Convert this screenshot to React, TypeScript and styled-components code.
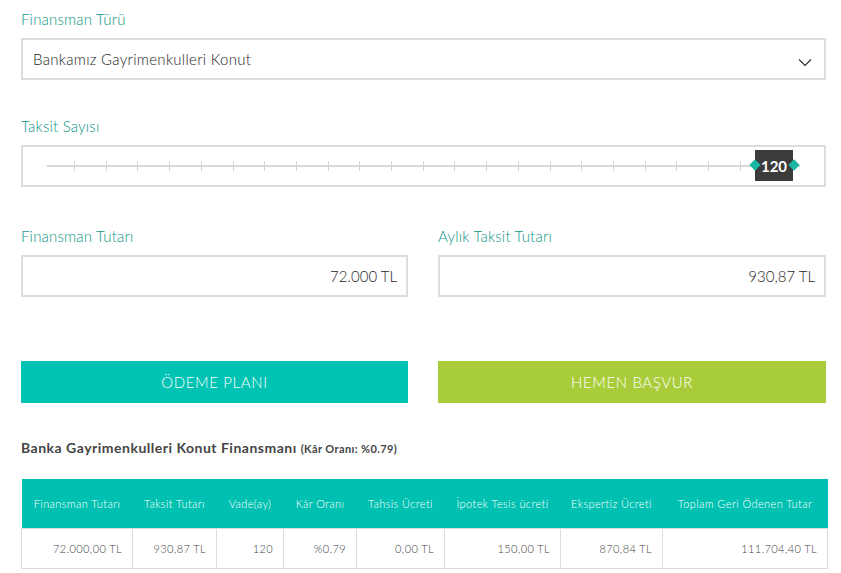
import styled, { createGlobalStyle } from "styled-components";

const GlobalStyle = createGlobalStyle`
  body {
    margin: 0;
    background: #ffffff;
    font-family: "Lato", "Open Sans", sans-serif;
    color: #333333;
  }
`;

const Page = styled.div`
  width: 805px;
  padding: 10px 0 0 21px;
`;

const Label = styled.div`
  font-size: 15px;
  font-weight: 300;
  line-height: 18px;
  letter-spacing: 0.2px;
  color: #0c9585;
  margin-bottom: 10px;
`;

const Box = styled.div`
  box-sizing: border-box;
  height: 42px;
  border: 2px solid #dddddd;
  background: #ffffff;
`;

const SelectBox = styled(Box)`
  display: flex;
  align-items: center;
  justify-content: space-between;
  padding: 0 12px 0 10px;
  font-size: 15px;
  font-weight: 300;
  letter-spacing: 0.3px;
  color: #1e1e1e;
  svg {
    margin-top: 7px;
  }
`;

const Section = styled.div<{ $gap: number }>`
  margin-top: ${(p) => p.$gap}px;
`;

const SliderBox = styled(Box)`
  position: relative;
  padding: 0 24px;
  display: flex;
  align-items: center;
`;

const Track = styled.div`
  position: relative;
  flex: 1;
  height: 2px;
  background: #d9d9d9;
`;

const Tick = styled.span`
  position: absolute;
  top: -4px;
  width: 1px;
  height: 10px;
  background: #d4d4d4;
`;

const Handle = styled.div`
  position: absolute;
  top: 3px;
  left: 732px;
  width: 38px;
  height: 31px;
  background: #3b3b3b;
  color: #ffffff;
  font-weight: 700;
  font-size: 15px;
  display: flex;
  align-items: center;
  justify-content: center;
  &::before,
  &::after {
    content: "";
    position: absolute;
    top: 11px;
    width: 8px;
    height: 8px;
    background: #1bb5a5;
    transform: rotate(45deg);
  }
  &::before {
    left: -4px;
  }
  &::after {
    right: -5px;
  }
`;

const Row = styled.div`
  display: grid;
  grid-template-columns: 387px 388px;
  column-gap: 30px;
`;

const ValueBox = styled(Box)`
  display: flex;
  align-items: center;
  justify-content: flex-end;
  padding: 0 9px;
  font-size: 15px;
  font-weight: 300;
  color: #1e1e1e;
`;

const Button = styled.button<{ $color: string }>`
  height: 42px;
  border: none;
  background: ${(p) => p.$color};
  color: #ffffff;
  font-family: inherit;
  font-size: 15px;
  font-weight: 300;
  letter-spacing: 0.6px;
  text-transform: uppercase;
  cursor: pointer;
`;

const Title = styled.div`
  font-size: 14px;
  line-height: 18px;
  font-weight: 700;
  letter-spacing: 0.5px;
  color: #454545;
  small {
    font-size: 11px;
    letter-spacing: 0.4px;
  }
`;

const Table = styled.table`
  width: 806px;
  margin-top: 21px;
  border-collapse: collapse;
  table-layout: fixed;
  font-size: 11px;
  font-weight: 300;
  letter-spacing: 0.4px;
`;

const Th = styled.th`
  height: 49px;
  padding: 0 2px;
  background: #00c1b1;
  color: #ffffff;
  font-weight: 300;
  text-align: center;
  white-space: nowrap;
`;

const Td = styled.td`
  height: 39px;
  padding: 0 10px;
  border: 1px solid #dddddd;
  color: #444444;
  text-align: right;
  white-space: nowrap;
`;

const columns = [
  { title: "Finansman Tutarı", width: 111, value: "72.000,00 TL" },
  { title: "Taksit Tutarı", width: 84, value: "930,87 TL" },
  { title: "Vade(ay)", width: 67, value: "120" },
  { title: "Kâr Oranı", width: 73, value: "%0.79" },
  { title: "Tahsis Ücreti", width: 88, value: "0,00 TL" },
  { title: "İpotek Tesis ücreti", width: 116, value: "150,00 TL" },
  { title: "Ekspertiz Ücreti", width: 102, value: "870,84 TL" },
  { title: "Toplam Geri Ödenen Tutar", width: 165, value: "111.704,40 TL" },
];

const ticks = Array.from({ length: 22 }, (_, i) => 27 + i * 31.7);

export default function App() {
  return (
    <Page>
      <GlobalStyle />
      <Label>Finansman Türü</Label>
      <SelectBox>
        <span>Bankamız Gayrimenkulleri Konut</span>
        <svg width="14" height="9" viewBox="0 0 14 9">
          <path d="M1 1.5 7 7.5 13 1.5" fill="none" stroke="#333" strokeWidth="1.2" />
        </svg>
      </SelectBox>

      <Section $gap={37}>
        <Label>Taksit Sayısı</Label>
        <SliderBox>
          <Track>
            {ticks.map((x) => (
              <Tick key={x} style={{ left: x }} />
            ))}
          </Track>
          <Handle>120</Handle>
        </SliderBox>
      </Section>

      <Section $gap={40}>
        <Row>
          <div>
            <Label>Finansman Tutarı</Label>
            <ValueBox>72.000 TL</ValueBox>
          </div>
          <div>
            <Label>Aylık Taksit Tutarı</Label>
            <ValueBox>930,87 TL</ValueBox>
          </div>
        </Row>
      </Section>

      <Section $gap={64}>
        <Row>
          <Button $color="#00c3b3">Ödeme Planı</Button>
          <Button $color="#a9cd3a">Hemen Başvur</Button>
        </Row>
      </Section>

      <Section $gap={36}>
        <Title>
          Banka Gayrimenkulleri Konut Finansmanı <small>(Kâr Oranı: %0.79)</small>
        </Title>
        <Table>
          <colgroup>
            {columns.map((c) => (
              <col key={c.title} style={{ width: c.width }} />
            ))}
          </colgroup>
          <thead>
            <tr>
              {columns.map((c) => (
                <Th key={c.title}>{c.title}</Th>
              ))}
            </tr>
          </thead>
          <tbody>
            <tr>
              {columns.map((c) => (
                <Td key={c.title}>{c.value}</Td>
              ))}
            </tr>
          </tbody>
        </Table>
      </Section>
    </Page>
  );
}
